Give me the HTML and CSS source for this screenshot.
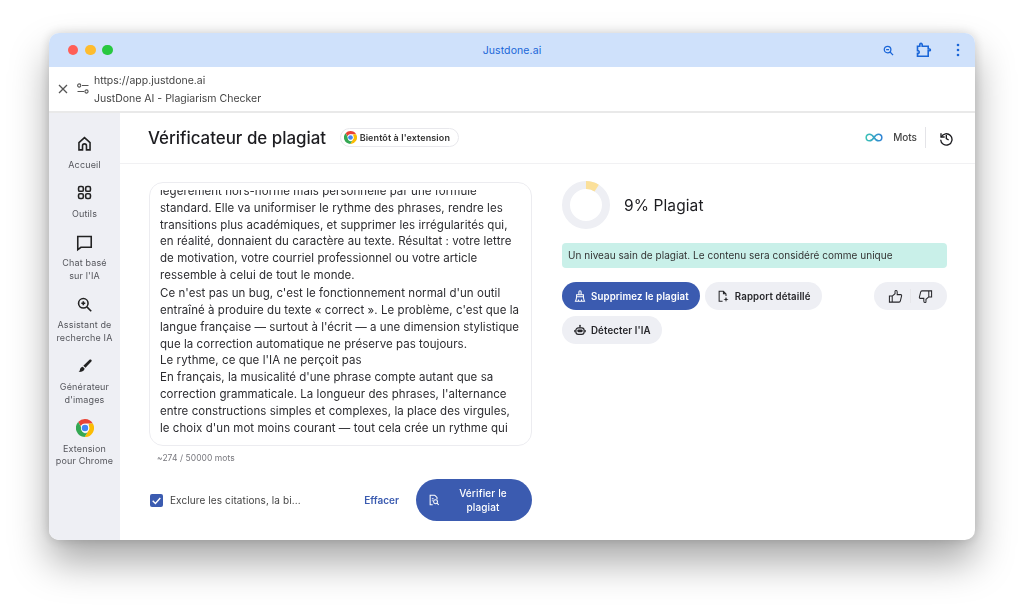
FILE: index.html
```html
<!DOCTYPE html>
<html lang="fr">
<head>
<meta charset="utf-8">
<title>JustDone AI - Plagiarism Checker</title>
<link rel="stylesheet" href="styles.css">
</head>
<body>
<svg class="defs" width="0" height="0" aria-hidden="true">
  <symbol id="chrome" viewBox="0 0 24 24">
    <path fill="#ea4335" d="M12 0a12 12 0 0 1 10.4 6H12a6 6 0 0 0-5.6 3.8L2.9 4.1A12 12 0 0 1 12 0z"/>
    <path fill="#fbbc04" d="M22.4 6a12 12 0 0 1-10.9 18l5.100-8.300A6 6 0 0 0 17 9l.2-3z"/>
    <path fill="#34a853" d="M2.9 4.1l5 8.700a4.500 4.500 0 0 0 8.700 2.900L11.500 24A12 12 0 0 1 2.9 4.100z"/>
    <circle cx="12" cy="12" r="5.400" fill="#fff"/>
    <circle cx="12" cy="12" r="4.300" fill="#4285f4"/>
  </symbol>
</svg>
<main class="window">
  <header class="titlebar">
    <div class="lights"><span class="light red"></span><span class="light yellow"></span><span class="light green"></span></div>
    <div class="site">Justdone.ai</div>
    <div class="bar-icons">
      <svg class="ic-zoom" viewBox="0 0 12 12"><circle cx="5" cy="5" r="3.600"/><path d="M7.700 7.700L11 11M3.400 5h3.200"/></svg>
      <svg class="ic-puzzle" viewBox="0 0 16 16"><path d="M1.500 4.200h2.300V2.600a1.200 1.200 0 0 1 2.400 0v1.600h6v2.800h1.300a.9.9 0 0 1 0 1.800h-1.300v5.400H1.500v-2.800c1.300.2 1.700-.6 1.700-1.400s-.5-1.500-1.700-1.400z"/></svg>
      <svg class="ic-dots" viewBox="0 0 4 14"><circle cx="2" cy="2" r="1.300"/><circle cx="2" cy="7" r="1.300"/><circle cx="2" cy="12" r="1.300"/></svg>
    </div>
  </header>
  <div class="addressbar">
    <svg class="ic-close" viewBox="0 0 10 10"><path d="M1 1l8 8M9 1l-8 8"/></svg>
    <svg class="ic-tune" viewBox="0 0 12 11"><circle cx="2.200" cy="2.500" r="1.600"/><path d="M5 2.500h6.500M.5 8.500H7"/><circle cx="9.500" cy="8.500" r="1.600"/></svg>
    <div class="address-text">
      <div>https://app.justdone.ai</div>
      <div>JustDone AI - Plagiarism Checker</div>
    </div>
  </div>
  <div class="app">
    <nav class="sidebar">
      <a class="nav-item">
        <svg class="nav-icon" viewBox="0 0 24 24"><path d="M5 10.800L12 4.500l7 6.300V20h-4.500v-5a2.500 2.500 0 0 0-5 0v5H5z"/></svg>
        <span>Accueil</span>
      </a>
      <a class="nav-item">
        <svg class="nav-icon" viewBox="0 0 24 24"><rect x="4.500" y="4.500" width="6" height="6" rx="1.800"/><rect x="13.500" y="4.500" width="6" height="6" rx="1.800"/><rect x="4.500" y="13.500" width="6" height="6" rx="1.800"/><rect x="13.500" y="13.500" width="6" height="6" rx="1.800"/></svg>
        <span>Outils</span>
      </a>
      <a class="nav-item">
        <svg class="nav-icon" viewBox="0 0 24 24"><path d="M3.500 4.500h17v13.500H7.500l-4 3z"/></svg>
        <span>Chat basé<br>sur l'IA</span>
      </a>
      <a class="nav-item">
        <svg class="nav-icon" viewBox="0 0 24 24"><circle cx="10.500" cy="10.500" r="6"/><path d="M15 15l5.500 5.500M8 10.500h5M10.500 8v5"/></svg>
        <span>Assistant de<br>recherche IA</span>
      </a>
      <a class="nav-item">
        <svg class="nav-icon" viewBox="0 0 24 24"><path class="solid" d="M20.500 3.500c.8.600.8 1.500.2 2.200l-7.500 8-2.700-2.500 7.800-7.600c.6-.6 1.500-.7 2.200-.1z"/><path class="solid" d="M9.800 12.300l2.300 2.200c-.2 2.700-2.700 4.600-7.600 4.500 1.700-1.200 1.300-2.300 2-4 .6-1.500 1.800-2.500 3.300-2.700z"/></svg>
        <span>Générateur<br>d'images</span>
      </a>
      <a class="nav-item">
        <svg class="nav-chrome"><use href="#chrome"/></svg>
        <span>Extension<br>pour Chrome</span>
      </a>
    </nav>
    <div class="content">
      <div class="page-head">
        <h1>Vérificateur de plagiat</h1>
        <div class="soon"><svg class="soon-icon"><use href="#chrome"/></svg>Bientôt à l'extension</div>
        <div class="head-right">
          <svg class="ic-infinity" viewBox="0 0 20 10"><defs><linearGradient id="inf" gradientUnits="userSpaceOnUse" x1="0" y1="0" x2="20" y2="0"><stop offset="0" stop-color="#3cc6b4"/><stop offset="1" stop-color="#2f7fd8"/></linearGradient></defs><path d="M10 5C8.500 2.500 7 1.300 5 1.300a3.700 3.700 0 0 0 0 7.400c2 0 3.500-1.200 5-3.700 1.500-2.500 3-3.700 5-3.700a3.700 3.700 0 0 1 0 7.400c-2 0-3.500-1.200-5-3.700z"/></svg>
          <span class="words">Mots</span>
          <svg class="ic-history" viewBox="0 0 24 24"><path d="M4.500 5v5.500H10"/><path d="M4.800 10.500A8.500 8.500 0 1 1 4 14.500"/><path d="M12.500 7.500V13l3.500 2"/></svg>
        </div>
      </div>
      <div class="columns">
        <section class="left">
          <div class="editor">
            <div class="editor-clip">
              <p class="editor-text">légèrement hors-norme mais personnelle par une formule<br>standard. Elle va uniformiser le rythme des phrases, rendre les transitions plus académiques, et supprimer les irrégularités qui, en réalité, donnaient du caractère au texte. Résultat : votre lettre de motivation, votre courriel professionnel ou votre article ressemble à celui de tout le monde.</p>
              <p class="editor-text next">Ce n'est pas un bug, c'est le fonctionnement normal d'un outil entraîné à produire du texte « correct ». Le problème, c'est que la langue française — surtout à l'écrit — a une dimension stylistique que la correction automatique ne préserve pas toujours.<br>Le rythme, ce que l'IA ne perçoit pas<br>En français, la musicalité d'une phrase compte autant que sa correction grammaticale. La longueur des phrases, l'alternance entre constructions simples et complexes, la place des virgules, le choix d'un mot moins courant — tout cela crée un rythme qui</p>
            </div>
          </div>
          <div class="count">~274 / 50000 mots</div>
          <div class="actions">
            <span class="check"><svg viewBox="0 0 12 12"><path d="M2.500 6.200l2.500 2.500 4.500-5"/></svg></span>
            <span class="exclude">Exclure les citations, la bi...</span>
            <a class="clear">Effacer</a>
            <button class="verify">
              <svg viewBox="0 0 14 14"><path d="M8 1.500H2.500v11h3M8 1.500l2.500 2.500v2M4.500 5.500h2M4.500 8h1"/><circle cx="8.800" cy="9" r="2.300"/><path d="M10.500 10.700l2 2"/></svg>
              <span>Vérifier le<br>plagiat</span>
            </button>
          </div>
        </section>
        <section class="right">
          <div class="score">
            <svg class="donut" viewBox="0 0 48 48"><circle class="track" cx="24" cy="24" r="20"/><circle class="value" cx="24" cy="24" r="20" pathLength="100" stroke-dasharray="9 91" transform="rotate(-90 24 24)"/></svg>
            <span class="score-text">9% Plagiat</span>
          </div>
          <div class="notice">Un niveau sain de plagiat. Le contenu sera considéré comme unique</div>
          <div class="buttons">
            <button class="pill primary">
              <svg viewBox="0 0 14 14"><path d="M5.700 5.500V2.300a1.300 1.300 0 0 1 2.600 0v3.200M3 8V5.500h8V8M3 8c0 2-.5 3.500-1.300 5h10.600C11.500 11.500 11 10 11 8zM5.200 13v-2M8.800 13v-2"/></svg>
              Supprimez le plagiat
            </button>
            <button class="pill report">
              <svg viewBox="0 0 14 14"><path d="M6.500 13H2.500V1.500H7.500L10.500 4.500V7M7.500 1.500v3h3"/><path class="solid" d="M10.500 8l.8 2.200 2.200.8-2.200.8-.8 2.200-.8-2.200-2.200-.8 2.200-.8z"/></svg>
              Rapport détaillé
            </button>
            <div class="rating">
              <svg viewBox="0 0 16 16"><path d="M1.500 7.500h3V14h-3zM4.500 7.500L7.500 5V2.500c0-1.300 2.300-1.300 2.300.7V6h3.700c.9 0 1.200.7 1 1.400l-1.300 5.300c-.2.800-.7 1.300-1.400 1.300H4.500"/></svg>
              <span class="rating-sep"></span>
              <svg viewBox="0 0 16 16"><path d="M14.500 8.500h-3V2h3zM11.500 8.500L8.500 11v2.500c0 1.300-2.300 1.300-2.300-.7V10H2.500c-.9 0-1.200-.7-1-1.400l1.300-5.300C3 2.500 3.500 2 4.200 2h7.300"/></svg>
            </div>
            <button class="pill">
              <svg class="robot" viewBox="0 0 14 14"><rect x="2.200" y="4.500" width="9.600" height="7.500" rx="2.800"/><path d="M7 4.500V2.500M1 7v2.500M13 7v2.500"/><circle class="solid" cx="7" cy="2" r="1"/><rect class="solid" x="3.800" y="6.500" width="6.400" height="3" rx="1.500"/></svg>
              Détecter l'IA
            </button>
          </div>
        </section>
      </div>
    </div>
  </div>
</main>
</body>
</html>
```
FILE: styles.css
```css
* { box-sizing: border-box; }
html, body { margin: 0; height: 100%; background: #fff; overflow: hidden; }
body {
  padding: 33px 49px 65px;
  font-family: Inter, "Liberation Sans", sans-serif;
  color: #1c1c20;
}
.defs { position: absolute; }
.window {
  height: 507px;
  display: flex;
  flex-direction: column;
  background: #fff;
  border-radius: 10px;
  overflow: hidden;
  box-shadow: 0 22px 38px rgba(0, 0, 0, .34), 0 0 12px rgba(0, 0, 0, .16);
  filter: blur(.3px);
}
.titlebar {
  height: 34px;
  flex: none;
  background: #cfe1fb;
  display: grid;
  grid-template-columns: 1fr auto 1fr;
  align-items: center;
  padding: 0 13px;
}
.lights { display: flex; gap: 6.700px; margin-left: 5.700px; }
.light { width: 10.700px; height: 10.700px; border-radius: 50%; }
.red { background: #ff5f57; }
.yellow { background: #febc2e; }
.green { background: #28c840; }
.site { color: #1a66d8; font-size: 10.500px; letter-spacing: .1px; }
.bar-icons { display: flex; align-items: center; justify-content: flex-end; }
.bar-icons svg { fill: none; stroke: #1a66d8; }
.ic-zoom { width: 11px; height: 11px; stroke-width: 1.400; margin-right: 22px; }
.ic-puzzle { width: 16px; height: 16px; stroke-width: 1.600; margin-right: 24px; }
.bar-icons .ic-dots { width: 4px; height: 14px; fill: #1a66d8; stroke: none; margin-right: 2px; }
.addressbar {
  height: 46px;
  flex: none;
  display: flex;
  align-items: center;
  padding: 0 0 0 9px;
  border-bottom: 2px solid #e9e9e9;
}
.ic-close { width: 10px; height: 10px; fill: none; stroke: #555; stroke-width: 1.300; margin-right: 9px; }
.ic-tune { width: 12px; height: 11px; fill: none; stroke: #555; stroke-width: 1.100; margin-right: 5px; margin-top: -2px; }
.address-text { font-size: 10.500px; line-height: 18px; color: #444; margin-top: 1px; }
.app { flex: 1; display: flex; min-height: 0; }
.sidebar {
  width: 71px;
  flex: none;
  background: #eeeff4;
  display: flex;
  flex-direction: column;
  align-items: center;
  padding-top: 21px;
  gap: 12.400px;
}
.nav-item {
  display: flex;
  flex-direction: column;
  align-items: center;
  gap: 5.500px;
  font-size: 9px;
  line-height: 12.500px;
  letter-spacing: .15px;
  color: #55565c;
  text-align: center;
  white-space: nowrap;
}
.nav-icon { width: 19px; height: 19px; fill: none; stroke: #222; stroke-width: 2; }
.nav-icon .solid { fill: #222; stroke: none; }
.nav-chrome { width: 18px; height: 18px; margin: .5px 0; }
.content { flex: 1; min-width: 0; display: flex; flex-direction: column; }
.page-head {
  height: 51px;
  flex: none;
  display: flex;
  align-items: center;
  padding: 0 21px 1px 28px;
  border-bottom: 1px solid #f1f1f3;
}
h1 { margin: 0; font-size: 16.900px; font-weight: 500; color: #1c1c20; }
.soon {
  margin-left: 13.500px;
  height: 19px;
  display: flex;
  align-items: center;
  gap: 3px;
  padding: 0 8px 0 3px;
  border: 1px solid #e8e8ec;
  border-radius: 10px;
  font-size: 9px;
  font-weight: 600;
  letter-spacing: .1px;
  color: #333;
}
.soon-icon { width: 13px; height: 13px; }
.head-right { margin-left: auto; display: flex; align-items: center; height: 21px; }
.ic-infinity { width: 18px; height: 9px; fill: none; stroke: url(#inf); stroke-width: 1.700; margin-right: 10px; }
.words {
  font-size: 10px;
  font-weight: 500;
  color: #444;
  padding-right: 8px;
  height: 100%;
  line-height: 21px;
  border-right: 1px solid #e4e4e8;
  margin-right: 12px;
}
.ic-history { width: 16px; height: 16px; fill: none; stroke: #1c1c20; stroke-width: 2; }
.columns { flex: 1; display: flex; padding: 18px 28px 0 29px; gap: 30px; min-height: 0; }
.left { width: 383px; flex: none; }
.editor {
  height: 264px;
  border: 1px solid #ececf0;
  border-radius: 14px;
  padding: 7px 11px 9px 10px;
}
.editor-clip { height: 100%; overflow: hidden; }
.editor-text {
  margin: -7px 0 0;
  font-size: 11.500px;
  line-height: 16.800px;
  letter-spacing: .05px;
  color: #2c2c30;
}
.editor-text.next { margin-top: 1.500px; }
.count { font-size: 8.500px; color: #77777d; margin: 7px 0 0 8px; line-height: 10px; letter-spacing: .05px; }
.actions { display: flex; align-items: center; margin-top: 16px; }
.check {
  width: 13px;
  height: 13px;
  flex: none;
  background: #3b5bb0;
  border-radius: 2px;
  display: flex;
  margin-left: 1px;
}
.check svg { fill: none; stroke: #fff; stroke-width: 1.300; }
.exclude { font-size: 10px; color: #444; margin-left: 7px; letter-spacing: .1px; white-space: nowrap; }
.clear { font-size: 10px; font-weight: 600; color: #3b5bb0; margin-left: auto; }
.verify {
  margin-left: 17px;
  width: 116px;
  height: 42px;
  flex: none;
  border: 0;
  border-radius: 21px;
  background: #3b5bb0;
  color: #fff;
  font: 500 10px/14px Inter, "Liberation Sans", sans-serif;
  letter-spacing: .15px;
  display: flex;
  align-items: center;
  padding: 0 0 0 12px;
}
.verify svg { width: 12px; height: 12px; fill: none; stroke: #fff; stroke-width: 1.200; flex: none; }
.verify span { flex: 1; text-align: center; padding-right: 6px; }
.right { flex: 1; min-width: 0; display: flex; flex-direction: column; margin-top: -1px; }
.score { display: flex; align-items: center; gap: 14px; height: 48px; }
.donut { width: 48px; height: 48px; fill: none; stroke-width: 8; }
.track { stroke: #eeeff4; }
.value { stroke: #fbe09a; }
.score-text { font-size: 15.500px; color: #1c1c20; letter-spacing: .1px; }
.notice {
  margin-top: 14px;
  height: 25px;
  background: #c9f0e9;
  border-radius: 4px;
  padding: 0 6px;
  font-size: 10px;
  line-height: 25px;
  letter-spacing: .03px;
  color: #333;
}
.buttons { display: flex; flex-wrap: wrap; gap: 6px 5px; margin-top: 14px; }
.pill {
  height: 28px;
  border: 0;
  border-radius: 14px;
  background: #eeeff4;
  color: #26262a;
  font: 600 9.700px Inter, "Liberation Sans", sans-serif;
  letter-spacing: .12px;
  display: flex;
  align-items: center;
  gap: 5px;
  padding: 0 11px 0 12px;
}
.pill.report { gap: 6px; }
.pill svg { width: 12px; height: 12px; fill: none; stroke: currentColor; stroke-width: 1.200; }
.pill .solid { fill: currentColor; stroke: none; }
.pill svg.robot { stroke-width: 1.400; }
.primary { background: #3b5bb0; color: #fff; }
.rating {
  margin-left: auto;
  width: 73px;
  height: 28px;
  background: #eeeff4;
  border-radius: 14px;
  display: flex;
  align-items: center;
  justify-content: center;
  gap: 7px;
}
.rating svg { width: 15px; height: 15px; fill: none; stroke: #26262a; stroke-width: 1.100; }
.rating-sep { width: 1px; height: 14px; background: #e6e6ea; }
```
